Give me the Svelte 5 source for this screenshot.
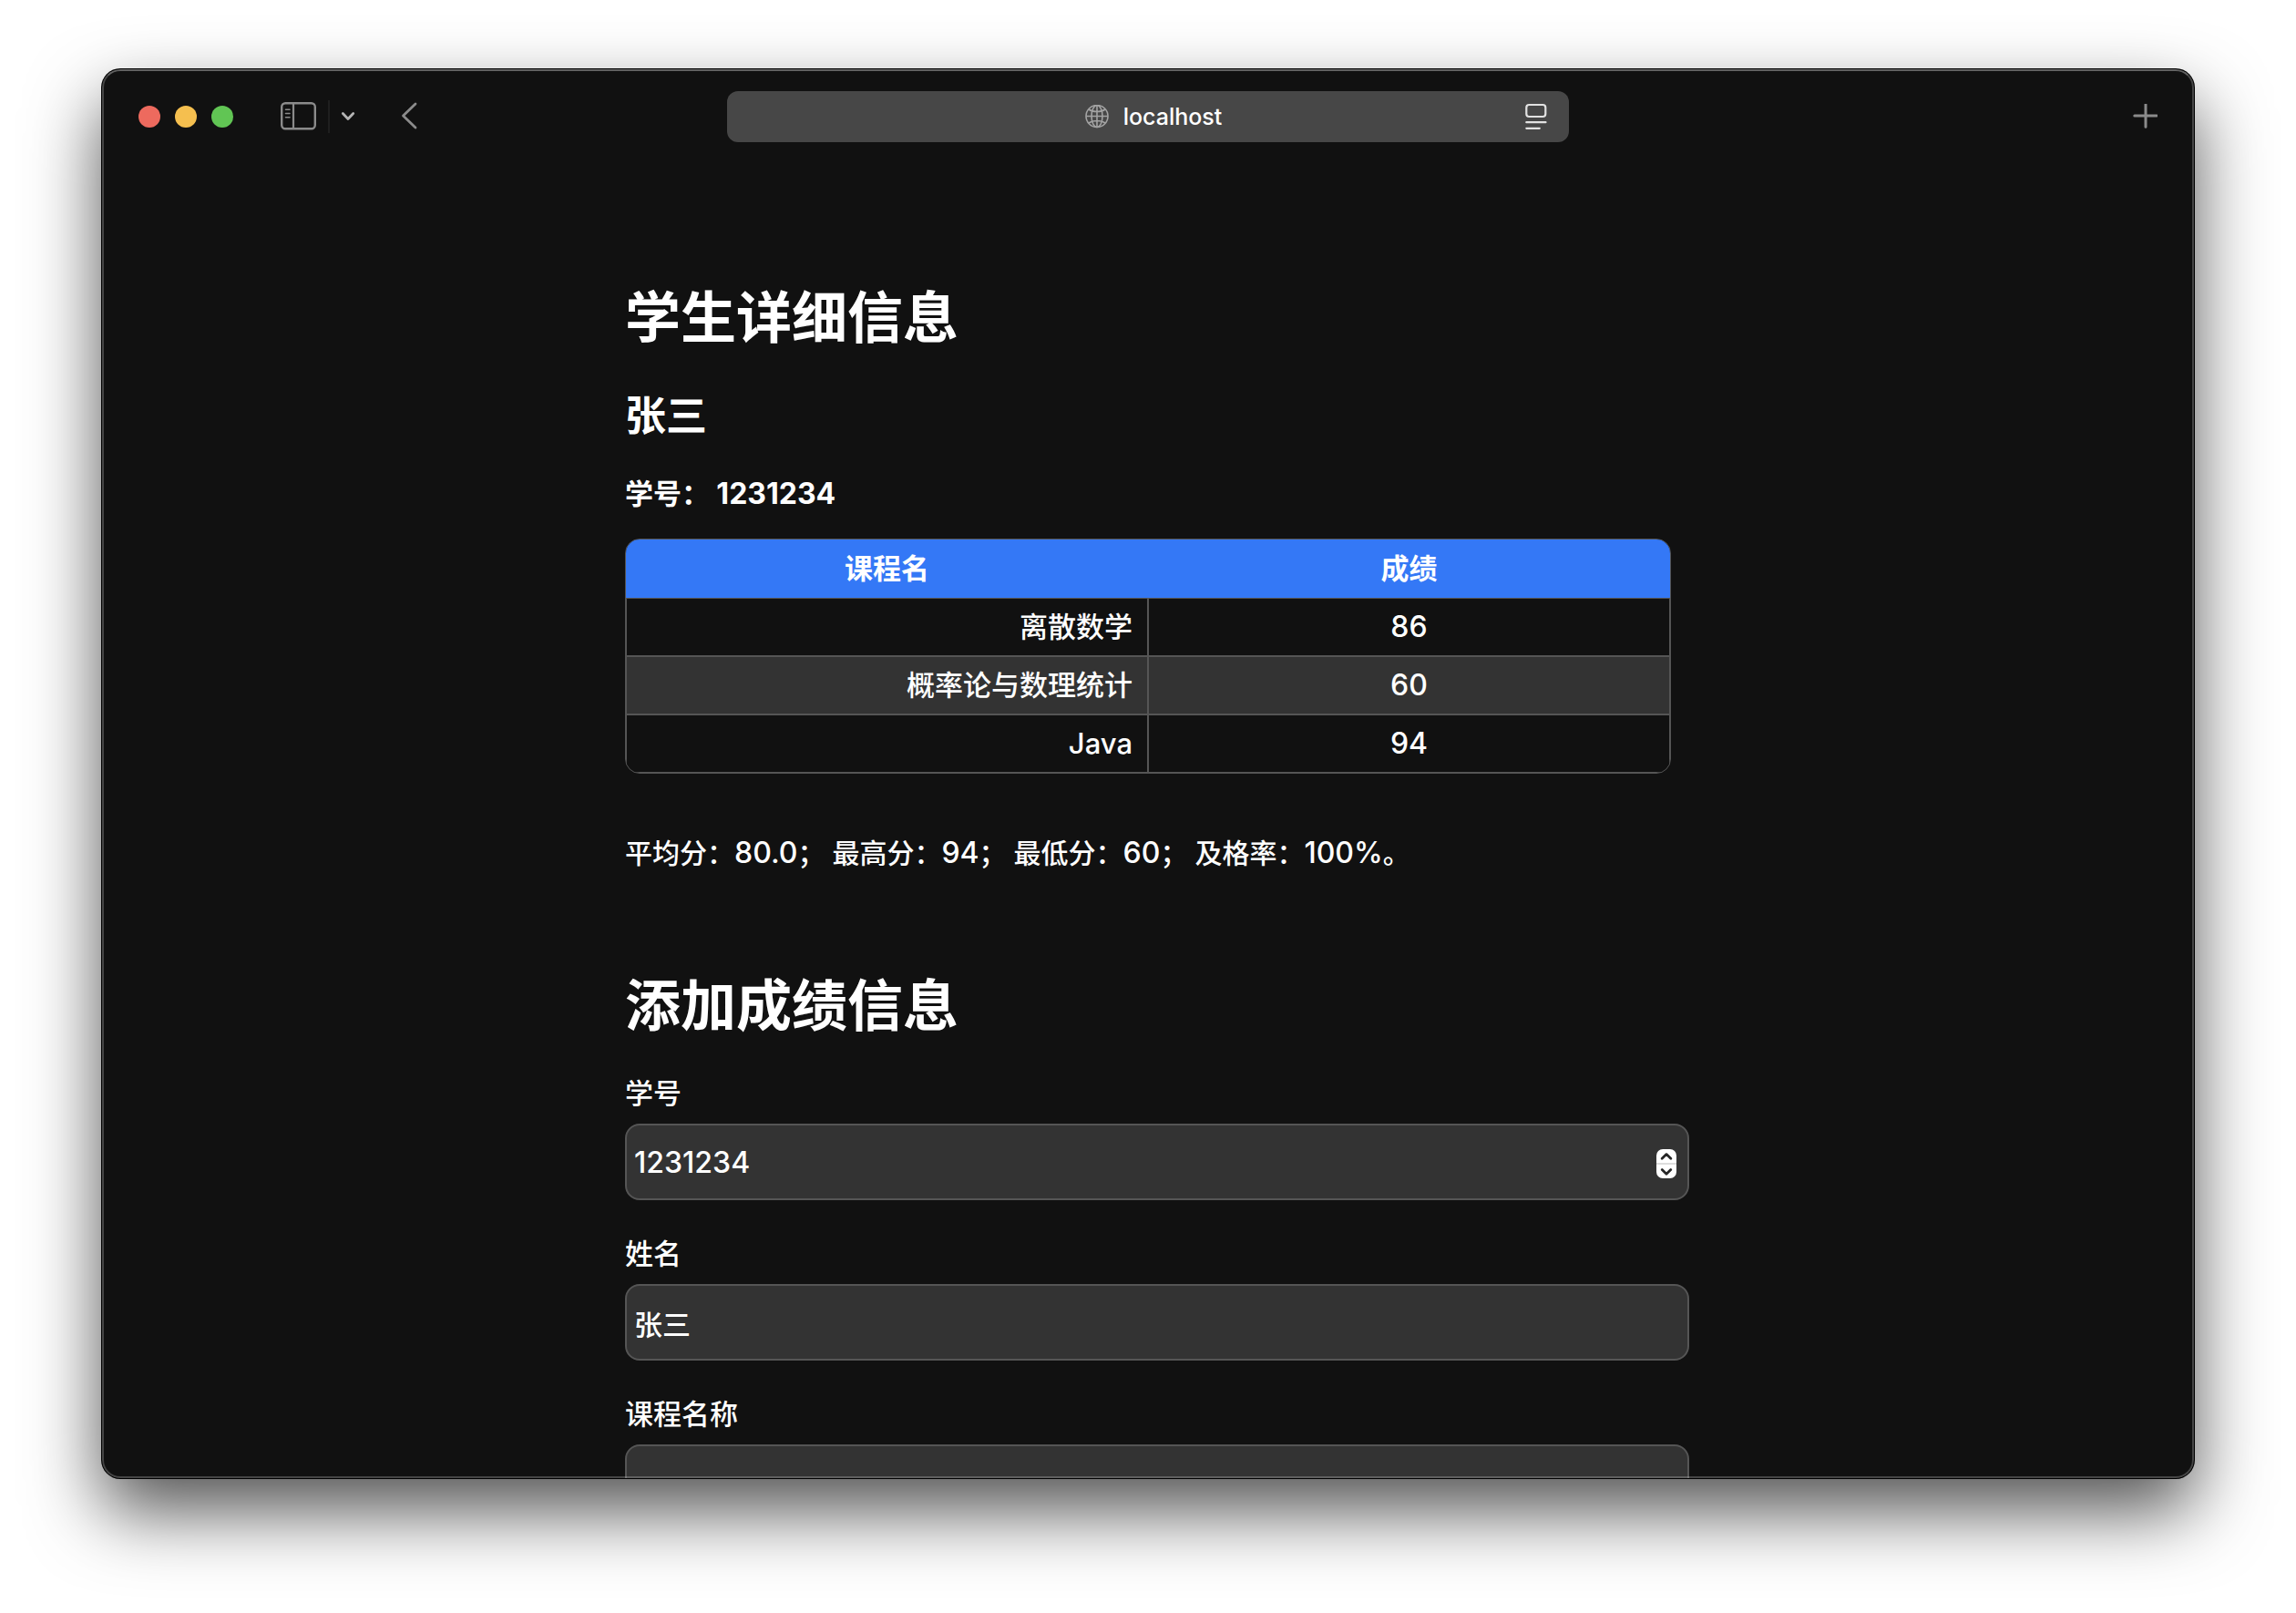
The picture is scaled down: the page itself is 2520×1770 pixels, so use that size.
<script lang="ts">
  interface Score {
    course: string;
    score: number;
  }

  let studentId = $state(1231234);
  let studentName = $state('张三');
  let courseName = $state('');

  const scores: Score[] = [
    { course: '离散数学', score: 86 },
    { course: '概率论与数理统计', score: 60 },
    { course: 'Java', score: 94 }
  ];

  const values = scores.map((s) => s.score);
  const average = (values.reduce((a, b) => a + b, 0) / values.length).toFixed(1);
  const highest = Math.max(...values);
  const lowest = Math.min(...values);
  const passRate = Math.round((values.filter((v) => v >= 60).length / values.length) * 100);
</script>

<div class="desktop">
  <div class="window">
    <!-- Browser toolbar -->
    <header class="toolbar">
      <div class="toolbar-left">
        <div class="lights">
          <button class="light close" aria-label="Close"></button>
          <button class="light minimize" aria-label="Minimize"></button>
          <button class="light zoom" aria-label="Zoom"></button>
        </div>
        <button class="tool sidebar" aria-label="Sidebar">
          <svg width="40" height="32" viewBox="0 0 40 32" fill="none" stroke="#8b8b8b">
            <rect x="1.2" y="1.2" width="36.6" height="28" rx="4" stroke-width="2.4" />
            <path d="M14 1.2v28" stroke-width="2.2" />
            <path d="M5.5 8.2h4.5M5.5 12.5h4.5M5.5 16.8h4.5" stroke-width="1.6" stroke-linecap="round" />
          </svg>
        </button>
        <span class="divider"></span>
        <button class="tool menu" aria-label="Tab groups">
          <svg width="16" height="12" viewBox="0 0 16 12" fill="none" stroke="#b4b4b4" stroke-width="2.8" stroke-linecap="round" stroke-linejoin="round">
            <path d="M2.3 2.6 8 8.4l5.7-5.8" />
          </svg>
        </button>
        <button class="tool back" aria-label="Back">
          <svg width="20" height="32" viewBox="0 0 20 32" fill="none" stroke="#8b8b8b" stroke-width="2.8" stroke-linecap="round" stroke-linejoin="round">
            <path d="M16 2 2.5 15 16 28" />
          </svg>
        </button>
      </div>

      <div class="address">
        <span></span>
        <span class="host">
          <svg width="26" height="26" viewBox="0 0 26 26" fill="none" stroke="#a3a3a3" stroke-width="1.6">
            <circle cx="13" cy="12.5" r="12" />
            <ellipse cx="13" cy="12.5" rx="6" ry="12" />
            <path d="M13 .5v24M1 12.5h24M4 5c4.6 3.4 13.4 3.4 18 0M4 20c4.6-3.4 13.4-3.4 18 0" />
          </svg>
          localhost
        </span>
        <button class="tool reader" aria-label="Page menu">
          <svg width="24" height="30" viewBox="0 0 24 30" fill="none" stroke="#e2e2e2" stroke-width="2.2" stroke-linecap="round">
            <rect x="1.3" y="2" width="21" height="13" rx="3" />
            <path d="M1.3 21.2h21.2M1.3 27.8h14.5" />
          </svg>
        </button>
      </div>

      <div class="toolbar-right">
        <button class="tool" aria-label="New tab">
          <svg width="28" height="28" viewBox="0 0 28 28" fill="none" stroke="#8b8b8b" stroke-width="3" stroke-linecap="round">
            <path d="M15 .8v24.4M2.8 13h24.4" />
          </svg>
        </button>
      </div>
    </header>

    <!-- Page content -->
    <main>
      <h1>学生详细信息</h1>
      <h2>张三</h2>
      <h3>学号： <span class="num">1231234</span></h3>

      <table>
        <thead>
          <tr>
            <th>课程名</th>
            <th>成绩</th>
          </tr>
        </thead>
        <tbody>
          {#each scores as row}
            <tr>
              <td class="course">{row.course}</td>
              <td class="num">{row.score}</td>
            </tr>
          {/each}
        </tbody>
      </table>

      <p class="stats">
        平均分：<span class="num">{average}</span>； 最高分：<span class="num">{highest}</span>； 最低分：<span class="num">{lowest}</span>； 及格率：<span class="num">{passRate}%</span>。
      </p>

      <h1>添加成绩信息</h1>
      <form>
        <label for="student-id">学号</label>
        <div class="number-field">
          <input id="student-id" class="num" type="number" bind:value={studentId} />
          <div class="stepper">
            <button type="button" aria-label="Increase" onclick={() => studentId++}>
              <svg width="14" height="10" viewBox="0 0 14 10"><path d="M2.2 7.2 7 2.6l4.8 4.6" /></svg>
            </button>
            <button type="button" aria-label="Decrease" onclick={() => studentId--}>
              <svg width="14" height="10" viewBox="0 0 14 10"><path d="M2.2 2.6 7 7.2l4.8-4.6" /></svg>
            </button>
          </div>
        </div>

        <label for="student-name">姓名</label>
        <input id="student-name" type="text" bind:value={studentName} />

        <label for="course-name">课程名称</label>
        <input id="course-name" type="text" bind:value={courseName} />
      </form>
    </main>
  </div>
</div>

<style>
  :global(body) {
    margin: 0;
    background: #fff;
  }

  .desktop {
    box-sizing: border-box;
    height: 100vh;
    padding: 76px 112px 148px;
    overflow: hidden;
    font-family: Inter, 'Noto Sans CJK SC', sans-serif;
    color: #fff;
  }

  .window {
    position: relative;
    height: 100%;
    overflow: hidden;
    border-radius: 20px;
    background: #111;
    box-shadow:
      0 0 0 1px #000,
      0 36px 80px rgba(0, 0, 0, 0.68);
  }

  /* translucent rim drawn over the page */
  .window::after {
    content: '';
    position: absolute;
    inset: 0;
    border: 2px solid rgba(255, 255, 255, 0.22);
    border-top-color: rgba(255, 255, 255, 0.34);
    border-radius: 20px;
    pointer-events: none;
  }

  button {
    padding: 0;
    border: none;
    background: none;
  }

  svg {
    display: block;
  }

  /* Toolbar */
  .toolbar {
    display: grid;
    grid-template-columns: 1fr minmax(0, 924px) 1fr;
    align-items: center;
    height: 104px;
    padding: 0 40px;
  }

  .toolbar-left {
    display: flex;
    align-items: center;
  }

  .toolbar-right {
    display: flex;
    justify-content: flex-end;
  }

  .lights {
    display: flex;
    gap: 16px;
  }

  .light {
    width: 24px;
    height: 24px;
    border-radius: 50%;
  }

  .close {
    background: #ed6a5e;
  }

  .minimize {
    background: #f5bf4f;
  }

  .zoom {
    background: #61c554;
  }

  .sidebar {
    margin-left: 52px;
  }

  .divider {
    width: 2px;
    height: 36px;
    margin: 0 12px;
    background: #1f1f1f;
  }

  .back {
    margin-left: 50px;
  }

  .address {
    display: grid;
    grid-template-columns: 1fr auto 1fr;
    align-items: center;
    height: 56px;
    padding: 0 24px 0 36px;
    border-radius: 12px;
    background: #474747;
  }

  .host {
    display: flex;
    align-items: center;
    gap: 16px;
    font-size: 25px;
    font-weight: 500;
  }

  .reader {
    justify-self: end;
  }

  /* Page */
  main {
    width: 50%;
    margin: 0 auto;
    padding-top: 132px;
    font-size: 31px;
    font-weight: 500;
    line-height: 38px;
  }

  .num {
    font-size: 32px;
  }

  h1,
  h2,
  h3 {
    margin: 0;
    font-weight: 700;
  }

  h1 {
    font-size: 61px;
    line-height: 74px;
  }

  h2 {
    margin-top: 44px;
    font-size: 45px;
    line-height: 54px;
  }

  h3 {
    margin: 39px 0 30px;
    font-size: 31px;
    line-height: 38px;
  }

  table {
    width: 100%;
    table-layout: fixed;
    border: 1px solid #555;
    border-radius: 16px;
    border-spacing: 0;
    overflow: hidden;
  }

  th,
  td {
    box-sizing: border-box;
    height: 64px;
    padding: 0 16px;
    text-align: center;
  }

  th {
    height: 65px;
    border-bottom: 1px solid #555;
    background: #3478f6;
    font-weight: 700;
  }

  td {
    border: 1px solid #555;
    border-top: none;
    border-bottom-width: 2px;
  }

  tr:last-child td {
    height: 63px;
    border-bottom-width: 1px;
  }

  tbody tr:nth-child(even) {
    background: #333;
  }

  td.course {
    text-align: right;
  }

  .stats {
    margin: 68px 0 112px;
    font-size: 30px;
  }

  form {
    margin: 40px -20px 0 0;
  }

  label {
    display: block;
    margin-bottom: 14px;
  }

  input {
    box-sizing: border-box;
    display: block;
    width: 100%;
    height: 84px;
    margin: 0 0 40px;
    padding: 0 8px;
    border: 2px solid #555;
    border-radius: 16px;
    outline: none;
    background: #333;
    color: inherit;
    font-family: inherit;
    font-size: 31px;
    font-weight: inherit;
  }

  input.num {
    font-size: 32px;
    appearance: textfield;
  }

  .number-field {
    position: relative;
  }

  .stepper {
    position: absolute;
    top: 28px;
    right: 14px;
    display: flex;
    flex-direction: column;
    width: 22px;
    height: 32px;
    border-radius: 7px;
    overflow: hidden;
    background: #fff;
  }

  .stepper button {
    flex: 1;
    display: flex;
    align-items: center;
    justify-content: center;
  }

  .stepper button + button {
    border-top: 2px solid #ddd;
  }

  .stepper path {
    fill: none;
    stroke: #262626;
    stroke-width: 2.8;
    stroke-linecap: round;
    stroke-linejoin: round;
  }
</style>
